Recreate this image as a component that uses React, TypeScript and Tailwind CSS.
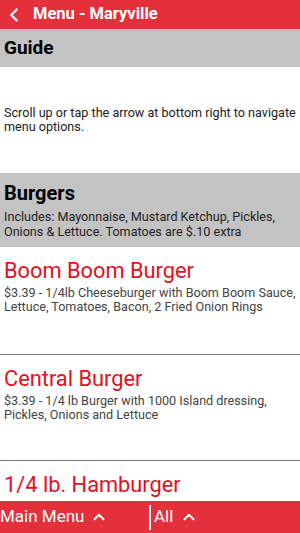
import { ChevronLeft, ChevronUp } from "lucide-react";

const ITEMS = [
  {
    name: "Boom Boom Burger",
    desc: "$3.39 - 1/4lb Cheeseburger with Boom Boom Sauce, Lettuce, Tomatoes, Bacon, 2 Fried Onion Rings",
  },
  {
    name: "Central Burger",
    desc: "$3.39 - 1/4 lb Burger with 1000 Island dressing, Pickles, Onions and Lettuce",
  },
  {
    name: "1/4 lb. Hamburger",
    desc: "",
  },
];

export default function App() {
  return (
    <div
      className="flex h-[533px] w-[300px] flex-col overflow-hidden bg-white"
      style={{ fontFamily: "Roboto, 'Noto Sans', sans-serif" }}
    >
      <header className="flex h-[29px] shrink-0 items-center bg-[#e3303a] text-white">
        <ChevronLeft className="ml-[3px] h-[22px] w-[22px]" strokeWidth={2.5} />
        <h1 className="ml-[8px] text-[16.5px] font-bold">Menu - Maryville</h1>
      </header>

      <main className="flex-1 overflow-hidden">
        <div className="flex h-[38px] items-center bg-[#c3c3c3] px-[4px]">
          <h2 className="text-[19px] font-bold text-black">Guide</h2>
        </div>
        <div className="flex h-[106px] items-center px-[4px]">
          <p className="text-[12.6px] leading-[14px] text-[#222]">
            Scroll up or tap the arrow at bottom right to navigate menu options.
          </p>
        </div>

        <div className="flex h-[74px] flex-col justify-center bg-[#c3c3c3] px-[4px]">
          <h2 className="text-[20px] font-bold leading-[24px] text-black">Burgers</h2>
          <p className="mt-[4px] text-[12.6px] leading-[15px] text-[#222]">
            Includes: Mayonnaise, Mustard Ketchup, Pickles, Onions &amp; Lettuce. Tomatoes are $.10 extra
          </p>
        </div>

        {ITEMS.map((item, i) => (
          <div
            key={item.name}
            className={`border-b border-[#777] px-[4px] pt-[11px] ${i === 0 ? "h-[108px]" : "h-[106px]"}`}
          >
            <h3 className="text-[21.8px] leading-[25px] text-[#e5101c]">{item.name}</h3>
            {item.desc && (
              <p className="mt-[3px] text-[12.6px] leading-[14px] text-[#444]">{item.desc}</p>
            )}
          </div>
        ))}
      </main>

      <footer className="flex h-[32px] shrink-0 items-center bg-[#e3303a] text-white">
        <button className="flex w-[149px] items-center text-[17px]">
          Main Menu
          <ChevronUp className="ml-[6px] h-[18px] w-[18px]" strokeWidth={2.5} />
        </button>
        <div className="h-[25px] w-[2px] bg-white" />
        <button className="ml-[3px] flex items-center text-[17px]">
          All
          <ChevronUp className="ml-[7px] h-[18px] w-[18px]" strokeWidth={2.5} />
        </button>
      </footer>
    </div>
  );
}
